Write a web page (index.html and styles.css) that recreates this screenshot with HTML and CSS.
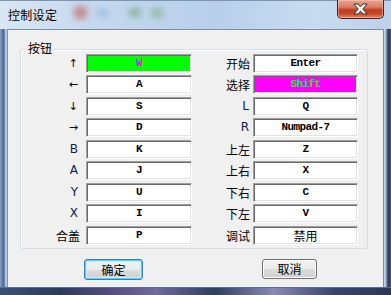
FILE: index.html
```html
<!DOCTYPE html>
<html lang="zh-CN">
<head>
  <meta charset="UTF-8" />
  <title>控制设定</title>
  <link rel="stylesheet" href="styles.css">
</head>
<body>

  <div class="window">
    <div class="titlebar">
      <span class="title">控制设定</span>
      <!-- blurred stuff behind the glass -->
      <div class="glass-bits">
        <span class="bit red"></span>
        <span class="bit blue"></span>
        <span class="bit green"></span>
        <span class="bit green2"></span>
      </div>
      <button class="close-btn">
        <svg width="17" height="12" viewBox="0 0 17 12">
          <path d="M2 1 L6 1 L8.5 3.9 L11 1 L15 1 L10.8 6 L15 11 L11 11 L8.5 8.1 L6 11 L2 11 L6.2 6 Z" fill="#fff" stroke="#3a2a2a" stroke-width="1" stroke-linejoin="round"/>
        </svg>
      </button>
    </div>

    <div class="middle">
      <div class="frame-left"></div>

      <div class="client">
        <div class="group">
          <span class="legend">按钮</span>
          <div class="keys">
            <span class="lbl arrow">↑</span><span class="key hot-green">W</span>
            <span class="lbl cjk">开始</span><span class="key">Enter</span>

            <span class="lbl arrow">←</span><span class="key">A</span>
            <span class="lbl cjk">选择</span><span class="key hot-pink">Shift</span>

            <span class="lbl arrow">↓</span><span class="key">S</span>
            <span class="lbl letter">L</span><span class="key">Q</span>

            <span class="lbl arrow">→</span><span class="key">D</span>
            <span class="lbl letter">R</span><span class="key">Numpad-7</span>

            <span class="lbl letter">B</span><span class="key">K</span>
            <span class="lbl cjk">上左</span><span class="key">Z</span>

            <span class="lbl letter">A</span><span class="key">J</span>
            <span class="lbl cjk">上右</span><span class="key">X</span>

            <span class="lbl letter">Y</span><span class="key">U</span>
            <span class="lbl cjk">下右</span><span class="key">C</span>

            <span class="lbl letter">X</span><span class="key">I</span>
            <span class="lbl cjk">下左</span><span class="key">V</span>

            <span class="lbl cjk">合盖</span><span class="key">P</span>
            <span class="lbl cjk">调试</span><span class="key cjk-val">禁用</span>
          </div>
        </div>

        <div class="buttons">
          <button class="btn default">确定</button>
          <button class="btn cancel">取消</button>
        </div>
      </div>

      <div class="frame-right"></div>
    </div>

    <div class="frame-bottom"></div>
  </div>

</body>
</html>
```

FILE: styles.css
```css
body {
  margin: 0;
  font-family: "Noto Sans CJK SC", sans-serif;
  background: #ffffff;
}

.window {
  width: 391px;
  height: 295px;
  display: flex;
  flex-direction: column;
  overflow: hidden;
}

/* title bar */
.titlebar {
  height: 29px;
  display: flex;
  align-items: flex-start;
  background: linear-gradient(90deg, #d9e6f3 0%, #c4d8ee 25%, #b8cfea 55%, #c8dcf0 80%, #bcd1ea 100%);
  border-top: 1px solid #7f95b0;
  box-sizing: border-box;
}

.title {
  font-size: 12px;
  line-height: 14px;
  margin: 7px 0 0 8px;
  letter-spacing: 0.3px;
  color: #000;
}

.glass-bits {
  display: flex;
  align-items: center;
  margin: 5px 0 0 17px;
  gap: 10px;
  flex: 1;
  filter: blur(3px);
  opacity: 0.6;
}

.bit {
  display: block;
  width: 13px;
  height: 13px;
  border-radius: 3px;
}
.bit.red { background: #c65a5a; }
.bit.blue { background: #8db2d9; width: 12px; height: 8px; }
.bit.green { background: #6e9e72; margin-left: 10px; width: 12px; height: 9px; }
.bit.green2 { background: #7dae7a; width: 12px; height: 10px; }

.close-btn {
  width: 47px;
  height: 19px;
  margin: -1px 7px 0 0;
  padding: 0;
  border: 1px solid #4a2020;
  border-top: none;
  border-radius: 0 0 5px 5px;
  background: linear-gradient(#e5a896 0%, #d77b62 40%, #c23b22 55%, #c6452b 75%, #e08a62 100%);
  box-shadow: inset 0 0 0 1px rgba(255, 200, 180, 0.5);
  display: flex;
  align-items: center;
  justify-content: center;
}

/* frame + client */
.middle {
  display: flex;
  height: 259px;
}

.frame-left {
  width: 7px;
  background: linear-gradient(90deg, #8ea6c4 0%, #5f7da6 30%, #4d6a95 55%, #a8bfd9 80%, #c9d9ea 100%);
}

.frame-right {
  width: 7px;
  background: linear-gradient(90deg, #d8e3ef 0%, #9fb3cc 25%, #3a4a6b 55%, #26334f 75%, #5b6c88 100%);
}

.client {
  flex: 1;
  background: #f0f0f0;
  border: 1px solid #7d8fa8;
  border-bottom: none;
  display: flex;
  flex-direction: column;
}

.frame-bottom {
  height: 7px;
  background: linear-gradient(90deg, #3b5078 0%, #2c3a5c 15%, #5b4f86 30%, #6f6aa0 40%, #2e3d60 55%, #8a88b8 70%, #3a4670 85%, #2b3556 100%);
  border-top: 1px solid #5a6c8c;
}

/* group box */
.group {
  position: relative;
  width: 346px;
  margin: 19px 0 0 12px;
  border: 1px solid #d5dfe5;
  border-radius: 3px;
  padding: 4px 0 3px 0;
  box-shadow: inset 1px 1px 0 #ffffff;
}

.legend {
  position: absolute;
  left: 5px;
  top: -9px;
  padding: 0 2px;
  font-size: 12px;
  line-height: 14px;
  background: #f0f0f0;
  color: #000;
}

.keys {
  display: grid;
  grid-template-columns: 65px 106px 61px 105px;
  grid-auto-rows: 19px;
  row-gap: 2.5px;
}

.lbl {
  text-align: right;
  line-height: 19px;
  color: #000;
}
.keys .lbl:nth-child(4n+1) { padding-right: 6px; }
.keys .lbl:nth-child(4n+3) { padding-right: 3px; }

.lbl.cjk { font-size: 12px; }
.lbl.arrow {
  font-family: "DejaVu Sans", sans-serif;
  font-size: 11px;
  padding-right: 8px !important;
}
.lbl.letter {
  font-family: "DejaVu Sans", sans-serif;
  font-size: 12px;
  color: #0e1c50;
  padding-right: 8px !important;
}
.keys .lbl.letter:nth-child(4n+3) { padding-right: 4px !important; }

.key {
  box-sizing: border-box;
  height: 19px;
  background: #ffffff;
  border-top: 1px solid #a0a0a0;
  border-left: 1px solid #a0a0a0;
  border-right: 1px solid #ffffff;
  border-bottom: 1px solid #ffffff;
  box-shadow: inset 1px 1px 0 #696969, inset -1px -1px 0 #e3e3e3;
  text-align: center;
  font-family: "Liberation Mono", monospace;
  font-size: 11px;
  font-weight: bold;
  letter-spacing: -0.6px;
  line-height: 17px;
  color: #000;
}

.key.hot-green {
  background: #00ff00;
  color: #ff00ff;
}
.key.hot-pink {
  background: #ff00ff;
  color: #00ff00;
}
.key.cjk-val {
  font-family: "Noto Sans CJK SC", sans-serif;
  font-size: 12px;
  font-weight: normal;
  letter-spacing: 0;
}

/* dialog buttons */
.buttons {
  display: flex;
  align-items: flex-start;
  margin: 10px 0 0 76px;
}

.btn {
  height: 21px;
  padding: 0;
  font-family: "Noto Sans CJK SC", sans-serif;
  font-size: 12px;
  color: #000;
  border: 1px solid #707070;
  border-radius: 3px;
  background: linear-gradient(#f2f2f2 0%, #ebebeb 50%, #dddddd 51%, #cfcfcf 100%);
  box-shadow: inset 0 0 0 1px #fcfcfc;
}

.btn.default {
  width: 59px;
  border-color: #3c7fb1;
  box-shadow: inset 0 0 0 1px #48d3fb, inset 0 0 0 2px #c6eefc;
}

.btn.cancel {
  width: 55px;
  height: 20px;
  margin-left: 119px;
}
```
